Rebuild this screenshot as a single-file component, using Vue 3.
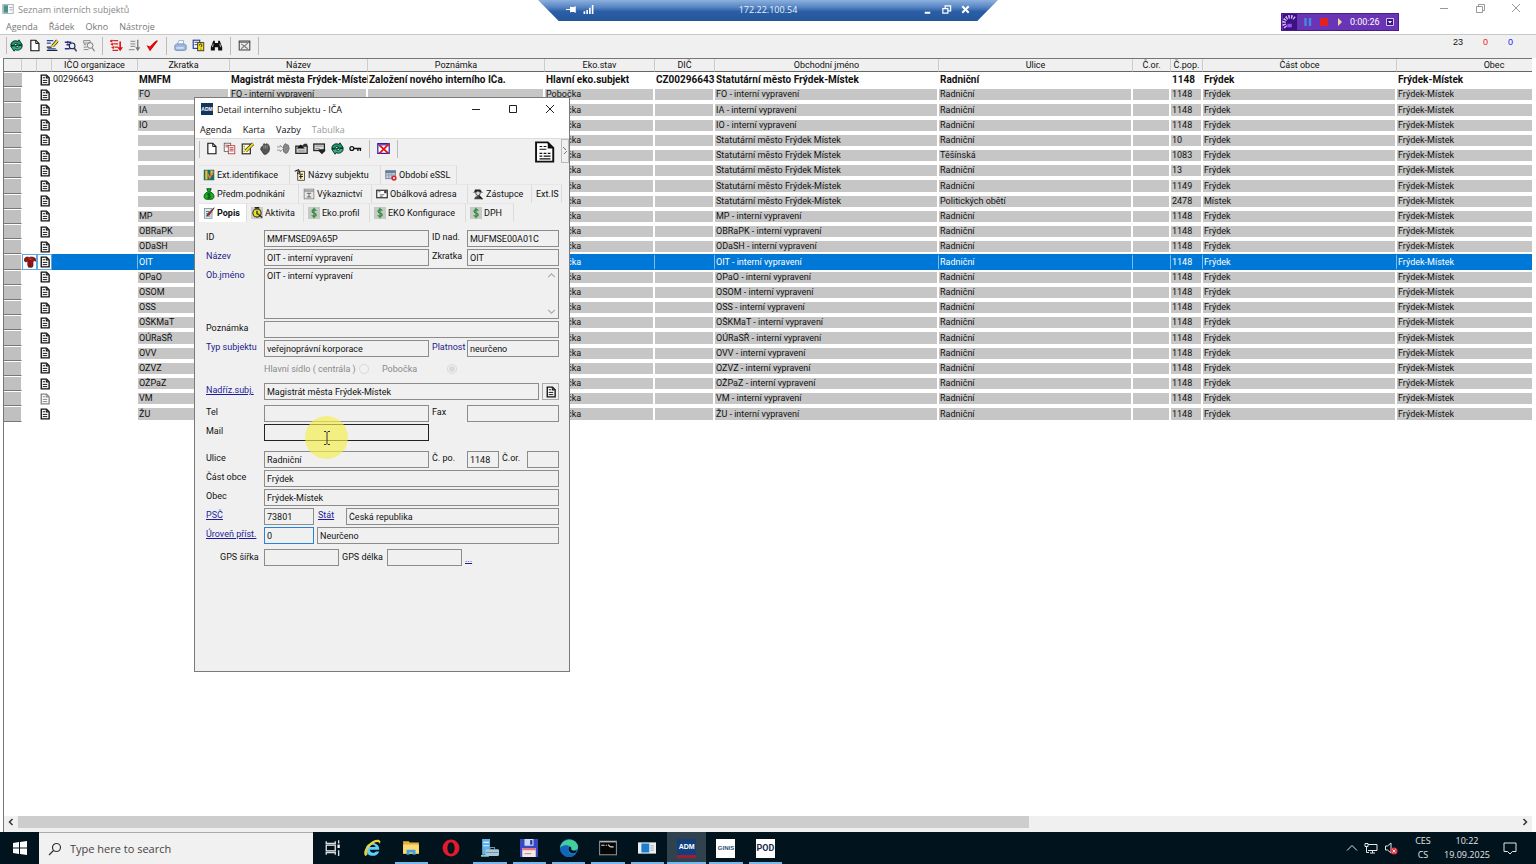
<script setup>
import { ref } from 'vue'

const icons = {
  window: '<rect x="1" y="2" width="14" height="12" fill="#f4f8f8" stroke="#8aa"/><rect x="2" y="3" width="6" height="10" fill="#4f8f8a"/><path d="M10 6h4M10 9h4" stroke="#999"/>',
  refresh: '<path d="M1 8c0-5 5-7 9-5l1-2 4 6-7 1 1-2c-2-1-4 0-4 2z" fill="#1a9a66" stroke="#022" stroke-width="1.1"/><path d="M15 8c0 5-5 7-9 5l-1 2-4-6 7-1-1 2c2 1 4 0 4-2z" fill="#2fb58a" stroke="#022" stroke-width="1.1"/>',
  page: '<path d="M3.5 1.5h6l4 4v9h-10z" fill="#fff" stroke="#111" stroke-width="1.4"/><path d="M9.5 1.5v4h4" fill="none" stroke="#111" stroke-width="1.2"/>',
  edit: '<path d="M1 2h8M1 5h5" stroke="#234a9a" stroke-width="1.6"/><path d="M1 10h6M1 14h13" stroke="#222" stroke-width="1.8"/><path d="M2 12h10" stroke="#3a62b8" stroke-width="1.6"/><path d="M14 2L8 9" stroke="#222" stroke-width="4"/><path d="M14 2L8 9" stroke="#f2dc20" stroke-width="2.4"/>',
  find: '<path d="M1 4h8M3 7h5M1 12h6" stroke="#2a2f90" stroke-width="2"/><path d="M4 2l3 2-3 2z" fill="#2a2f90"/><circle cx="10" cy="8.5" r="3.5" fill="#dfefff" stroke="#223" stroke-width="1.3"/><path d="M12.5 11l3 4" stroke="#446" stroke-width="2"/>',
  findgray: '<path d="M2 2h8v3H2zM2 7h3M2 10h4M2 13h6" stroke="#888" fill="none" stroke-width="1.2"/><circle cx="10" cy="8" r="3.5" fill="#eee" stroke="#777" stroke-width="1.2"/><path d="M12.5 11l3 4" stroke="#888" stroke-width="1.6"/>',
  sortred: '<path d="M0 2l2 1 1-2M1 6l2 1 1-2M2 10l2 1 1-2M4 2h6M5 6h5M6 10h4M3 14h7" stroke="#d22" stroke-width="1.8" fill="none"/><path d="M12.5 3v8" stroke="#e01010" stroke-width="2"/><path d="M9 10h7l-3.5 5z" fill="#e01010"/>',
  sortgray: '<path d="M3 3h6M3 6h6M3 9h6M1 13h7" stroke="#999" stroke-width="1.4"/><path d="M12 1v11" stroke="#777" stroke-width="1.6"/><path d="M9 10h6l-3 5z" fill="#777"/>',
  check: '<path d="M2 9l3 5L14 2l-3 2-6 6z" fill="#f01010" stroke="#d00" stroke-width="1.3"/>',
  printer: '<path d="M4 7l2-5h6l-1 5z" fill="#fff" stroke="#8ca4cc"/><path d="M1 8l2-2h10l2 2v5l-2 1H2l-1-1z" fill="#9fb7df" stroke="#6a86b8"/><path d="M3 11h9" stroke="#eef" stroke-width="1.5"/>',
  copy: '<rect x="1.5" y="1.5" width="8" height="10" fill="#fff" stroke="#223a9a" stroke-width="1.4"/><path d="M3 4h5M3 7h5" stroke="#223"/><rect x="7" y="4.5" width="7.5" height="10" fill="#f4e31c" stroke="#222"/><path d="M9 8c0-3 4-2 3 0l-1 2M11 12v1" stroke="#222" fill="none" stroke-width="1.2"/>',
  binoc: '<path d="M4 2h2v3h4V2h2l3 8v4h-5v-4H6v4H1v-4z" fill="#111"/><path d="M4 6l-1 4M12 6l1 4" stroke="#ddd"/>',
  boxgray: '<rect x="1.5" y="2.5" width="13" height="11" fill="#eee" stroke="#444" stroke-width="1.3"/><path d="M1 4h14" stroke="#444"/><path d="M4 12l8-7M4 6l8 6" stroke="#777" stroke-width="1.3"/>',
  copydoc: '<rect x="1.5" y="1.5" width="8" height="10" fill="#fff" stroke="#555"/><rect x="6.5" y="4.5" width="8" height="10" fill="#fff" stroke="#a33"/><path d="M3 4h4M3 6h3M8 7h5M8 9h5M8 11h5" stroke="#a22"/>',
  editdoc: '<rect x="1.5" y="2.5" width="10" height="12" fill="#fffbe0" stroke="#222" stroke-width="1.4"/><path d="M3 5l2 1M3 8l2 1M3 11l2 1" stroke="#aa1" stroke-width="1.4"/><path d="M15 2L6 11" stroke="#222" stroke-width="4"/><path d="M15 2L6 11" stroke="#f2dc20" stroke-width="2.6"/>',
  hand: '<path d="M3 6l2-1 1-3 2 1 2-1 2 2 1 4-1 4-3 3H6L2 9z" fill="#555" stroke="#333"/><path d="M6 4v4M8 4v4M10 4v4" stroke="#aaa" stroke-width=".8"/>',
  handout: '<path d="M8 5l2-3 2 1 2 1 1 4-2 5-2 1-3-2z" fill="#888" stroke="#666"/><path d="M0 6h4V4l4 4-4 4v-2H0" fill="#eee" stroke="#888"/>',
  folderup: '<path d="M1 5h14v9H1z" fill="#ccc" stroke="#222" stroke-width="1.5"/><path d="M9 5h6V2h-4z" fill="#333"/><path d="M7 3l-5 5h10z" fill="#111"/><path d="M4 11h8" stroke="#777"/>',
  monitor: '<rect x="1" y="2.5" width="13" height="8" fill="#ddd" stroke="#222" stroke-width="1.6"/><path d="M3 5h9M3 8h5" stroke="#777"/><path d="M7 9h8v2l-4 4-4-4z" fill="#222"/>',
  key: '<circle cx="3.5" cy="8" r="2.4" fill="none" stroke="#111" stroke-width="1.5"/><path d="M6 8h9M11 8v3M14 8v3" stroke="#111" stroke-width="1.7"/>',
  redx: '<rect x="1" y="2" width="14" height="12" fill="#fff" stroke="#22a" stroke-width="1.5"/><path d="M1 3.5h14" stroke="#33b" stroke-width="1.5"/><path d="M3 14L15 2M3 4l11 10" stroke="#e11" stroke-width="2.2"/>',
  bigdoc: '<path d="M1.5 1h8.5l4 4v10h-12.5z" fill="#fff" stroke="#111" stroke-width="1.4"/><path d="M10 1v4.5h4z" fill="#111"/><path d="M4 4h2M7 4h2M4 6h5M4 9h2M7 9h2M10 9h2M4 11h2M7 11h5M4 13h8" stroke="#111" stroke-width=".9"/>',
  rowdoc: '<path d="M3 1.5h7l3.5 3.5v9.5H3z" fill="#fff" stroke="#111" stroke-width="1.8"/><path d="M9 2v4h4z" fill="#111"/><path d="M5 5h3M5 8.5h6M5 11.5h6" stroke="#111" stroke-width="1.3"/>',
  jester: '<path d="M1 3c2-2 4-2 6-1 2-1 5-1 8 1l1 4-3-1-1 2v5l-1 2H6l-1-3V7L2 8 0 6z" fill="#9c1414" stroke="#400" stroke-width=".8"/><path d="M8 6v8" stroke="#501010"/><path d="M6 3l2 2 3-2" stroke="#d44" fill="none"/>',
  extid: '<rect x="1" y="1" width="14" height="14" fill="#14706c"/><path d="M3 2h3v12H3zM10 2h3v6h-3z" fill="#f0c030"/><path d="M6 6l3 6 5-9" stroke="#f07a28" stroke-width="2" fill="none"/>',
  names: '<rect x="5" y="3" width="9" height="12" fill="#fff4c0" stroke="#222"/><path d="M1 3l5-2 2 4-4 1M7 7h5M7 10h5M9 8v5" stroke="#222" stroke-width="1.5" fill="none"/>',
  period: '<rect x="1" y="2" width="13" height="11" fill="#bcd" stroke="#678"/><path d="M1 4h13" stroke="#468" stroke-width="2"/><path d="M1 8h13M5 5v8M9 5v8" stroke="#89a"/><circle cx="12" cy="12" r="3.5" fill="#d23"/><circle cx="12" cy="12" r="1.3" fill="#fff"/>',
  bag: '<path d="M5 1h6L9 5c7 2 7 10 2 10H5C0 15 0 7 7 5z" fill="#16b416" stroke="#041" stroke-width="1.2"/><path d="M10 8c-5-1-5 2-2 2s3 4-2 3M8 6v8" stroke="#033" fill="none"/>',
  report: '<rect x="1.5" y="1.5" width="13" height="13" fill="#e8e8e8" stroke="#777"/><path d="M2 4h12M5 7h6M8 7v5M5 12h6" stroke="#444"/>',
  letter: '<rect x="1" y="3" width="14" height="10" fill="#fff" stroke="#222" stroke-width="1.5"/><path d="M3 5h3M5 9h6M5 11h4" stroke="#444"/><path d="M11 4h3v3h-3z" fill="#333"/>',
  agent: '<path d="M3 5l1-3h7l2 3 2 1H1z" fill="#222"/><circle cx="8" cy="7" r="3" fill="#ddd" stroke="#222"/><path d="M3 15c0-6 10-6 10 0z" fill="#444"/><path d="M9 10l5 5" stroke="#111" stroke-width="1.5"/>',
  note: '<rect x="2" y="2" width="10" height="13" fill="#dcebe8" stroke="#789"/><path d="M4 6h4M4 9h5M4 12h6" stroke="#456"/><path d="M15 1L7 8l-2 4 4-2z" fill="#c22" stroke="#433"/>',
  activity: '<rect x="0" y="0" width="16" height="16" fill="#ccc"/><circle cx="8" cy="8" r="5.5" fill="#e9e020" stroke="#333" stroke-width="1.5"/><path d="M5 1h6M8 5v4l3 1M10 10l5 4" stroke="#222" stroke-width="1.7" fill="none"/>',
  dollar: '<rect width="16" height="16" fill="#c4cac4"/><path d="M11 5C9 2 4 4 6 7l4 2c3 3-3 5-5 2M8 1v14" stroke="#2f8a3a" stroke-width="1.7" fill="none"/>',
  taskview: '<path d="M2 2v2h8V2M2 14v-2h8v2M13 1v3M13 10v5" stroke="#ddd" fill="none" stroke-width="1.2"/><rect x="2" y="5.5" width="8" height="5" fill="none" stroke="#ddd" stroke-width="1.2"/><rect x="12" y="5" width="2" height="3" fill="#fff"/>',
  ie: '<path d="M14.5 9.5H6c.4 3 4 3.5 5.5 1.5h3c-2.5 6-11.5 5-12-1.5C2 2 14.5 1 14.5 9.500zM6 7h5.200c-.8-2.500-4.500-2.500-5.200 0z" fill="#5fd0f5"/><path d="M2 15C-2 11 8-1 14.500 1c1.300.5 1 2 .5 3.500 0-2-3-2.500-5.500-.8C5 7 2 11 4 14z" fill="#f2cf3a"/>',
  explorer: '<path d="M1 2h5l1 1h8v10H1z" fill="#e8b23a"/><path d="M1 5h14v8H1z" fill="#fbdc74"/><path d="M4 14V9.500h8V14h-2.500v-2h-3v2z" fill="#3f9fe0"/>',
  opera: '<ellipse cx="8" cy="8" rx="7.5" ry="7.5" fill="#e01b2d"/><ellipse cx="8" cy="8" rx="3.2" ry="5.2" fill="#02141d"/>',
  server: '<path d="M1 0h7v14H1z" fill="#5fb2e8"/><path d="M2 3h5M2 6h5" stroke="#d4efff"/><path d="M0 15h7" stroke="#9cc" stroke-width="1.5"/><rect x="4" y="9" width="12" height="6" rx="1" fill="#a9c9d8"/><path d="M8 9V7.5h4V9M4.5 12h11" stroke="#6f94a6" fill="none"/>',
  floppy: '<path d="M0 0h16v16H0z" fill="#3848c0"/><path d="M4 0h8v6H4z" fill="#cdd6f4"/><path d="M9 1h2v4H9z" fill="#2636a0"/><path d="M2 8h12v8H2z" fill="#f6e6e8"/><path d="M2 8h12v2H2z" fill="#e07880"/><path d="M4 13h6" stroke="#a99"/>',
  edge: '<circle cx="8" cy="8" r="8" fill="#1b7fd0"/><path d="M0 8C1-1 14-2 16 6c.5 4-3 5-6 4 1-5-6-6-10-2z" fill="#43cf9c"/><path d="M0 8c3-4 9-3 8 1-2 3 2 6 6 4-4 6-14 3-14-5z" fill="#1464b8"/><path d="M8 8c-1 3 2 6 6 4l1-2c-3 1-6 0-5-2 0-1-2-2-2 0z" fill="#02141d"/>',
  cmd: '<rect x=".5" y="2" width="15" height="12" fill="#050505" stroke="#888"/><path d="M1 2.5h14" stroke="#ccc"/><path d="M2 5.5h3M6 5.5h1M8 5l2 2M10 7h3" stroke="#ddd"/>',
  app: '<path d="M0 3h16v10H0z" fill="#eee"/><path d="M3 4h7v8H3z" fill="#1c7ed0"/><path d="M11 6h3M11 8h3M11 10h3" stroke="#9ab"/>',
}

const columns = ['', '', '', 'IČO organizace', 'Zkratka', 'Název', 'Poznámka', 'Eko.stav', 'DIČ', 'Obchodní jméno', 'Ulice', 'Č.or.', 'Č.pop.', 'Část obce', 'Obec']

const sub = (z) => ({ z, n: `${z} - interní vypravení`, o: `${z} - interní vypravení` })
const mesto = (o, u, c, cast = 'Frýdek') => ({ z: '', n: o, o, u, c, cast })
const rows = [
  sub('FO'), sub('IA'), sub('IO'),
  mesto('Statutární město Frýdek Místek', 'Radniční', '10'),
  mesto('Statutární město Frýdek Místek', 'Těšínská', '1083'),
  mesto('Statutární město Frýdek Místek', 'Radniční', '13'),
  mesto('Statutární město Frýdek-Místek', 'Radniční', '1149'),
  mesto('Statutární město Frýdek-Místek', 'Politických obětí', '2478', 'Místek'),
  ...['MP', 'OBRaPK', 'ODaSH', 'OIT', 'OPaO', 'OSOM', 'OSS', 'OŠKMaT', 'OÚRaSŘ', 'OVV', 'OZVZ', 'OŽPaZ', 'VM', 'ŽU'].map(sub),
]

const mainTools = [['refresh', 'page', 'edit', 'find', 'findgray'], ['sortred', 'sortgray', 'check'], ['printer', 'copy', 'binoc'], ['boxgray']]
const dlgTools = [['page', 'copydoc', 'editdoc', 'hand', 'handout', 'folderup', 'monitor', 'refresh', 'key'], ['redx']]

const tabRows = [
  [['extid', 'Ext.identifikace', 'w91'], ['names', 'Názvy subjektu', 'w91'], ['period', 'Období eSSL', 'w76']],
  [['bag', 'Předm.podnikání', 'w100'], ['report', 'Výkaznictví', 'w72'], ['letter', 'Obálková adresa', 'w97'], ['agent', 'Zástupce', 'w62'], ['', 'Ext.IS', 'w30']],
  [['note', 'Popis', 'w48'], ['activity', 'Aktivita', 'w57'], ['dollar', 'Eko.profil', 'w66'], ['dollar', 'EKO Konfigurace', 'w97'], ['dollar', 'DPH', 'w48']],
]

const tasks = [
  ['taskview', 'Task View', ''], ['ie', 'Internet Explorer', ''], ['explorer', 'File Explorer', 'run'], ['opera', 'Opera', ''],
  ['server', 'Server Manager', 'run'], ['floppy', 'Commander', 'run'], ['edge', 'Edge', 'run'], ['cmd', 'Command Prompt', 'run'],
  ['app', 'Application', 'run'], ['adm', 'ADM', 'run active'], ['ginis', 'GINIS', 'run'], ['pod', 'POD', 'run'],
]

const branch = ref('pobocka')
</script>

<template>
  <div class="desktop">
    <header class="title">
      <svg class="ic" viewBox="0 0 16 16" v-html="icons.window"></svg>
      <span>Seznam interních subjektů</span>
    </header>
    <nav class="menu main-menu">
      <button>Agenda</button><button>Řádek</button><button>Okno</button><button>Nástroje</button>
    </nav>
    <div class="win-ctl">
      <button aria-label="Minimalizovat"><svg viewBox="0 0 12 12"><path d="M2 6.5h8" /></svg></button>
      <button aria-label="Obnovit"><svg viewBox="0 0 12 12"><path d="M2.5 4.5h6v6h-6zM4.5 4V2.5h6v6H9" /></svg></button>
      <button aria-label="Zavřít"><svg viewBox="0 0 12 12"><path d="M2 2l8 8M10 2l-8 8" /></svg></button>
    </div>

    <div class="toolbar">
      <template v-for="(g, i) in mainTools" :key="i">
        <button v-for="t in g" :key="t" class="tool" :aria-label="t"><svg viewBox="0 0 16 16" v-html="icons[t]"></svg></button>
        <i class="sep"></i>
      </template>
      <div class="counts"><span>23</span><span class="red">0</span><span class="blue">0</span></div>
    </div>

    <main class="grid-pane">
      <div class="grid-view">
        <table>
          <colgroup><col v-for="(c, i) in columns" :key="i" :class="'c' + i" /></colgroup>
          <thead><tr><th v-for="(c, i) in columns" :key="i">{{ c }}</th></tr></thead>
          <tbody>
            <tr class="head">
              <td class="sel"></td><td class="mark"></td>
              <td class="doc"><svg viewBox="0 0 16 16" v-html="icons.rowdoc"></svg></td>
              <td class="ico">00296643</td><td>MMFM</td><td>Magistrát města Frýdek-Místek</td><td>Založení nového interního IČa.</td>
              <td>Hlavní eko.subjekt</td><td>CZ00296643</td><td>Statutární město Frýdek-Místek</td><td>Radniční</td><td></td>
              <td>1148</td><td>Frýdek</td><td>Frýdek-Místek</td>
            </tr>
            <tr v-for="(r, i) in rows" :key="i" :class="{ on: r.z === 'OIT', dim: r.z === 'VM' }">
              <td class="sel"></td>
              <td class="mark"><svg v-if="r.z === 'OIT'" viewBox="0 0 16 16" v-html="icons.jester"></svg></td>
              <td class="doc"><svg viewBox="0 0 16 16" v-html="icons.rowdoc"></svg></td>
              <td class="ico"></td>
              <td>{{ r.z }}</td><td>{{ r.n }}</td><td></td><td>Pobočka</td><td></td><td>{{ r.o }}</td>
              <td>{{ r.u || 'Radniční' }}</td><td></td><td>{{ r.c || '1148' }}</td><td>{{ r.cast || 'Frýdek' }}</td><td>Frýdek-Místek</td>
            </tr>
          </tbody>
        </table>
      </div>
      <div class="hscroll">
        <button aria-label="Vlevo"><svg viewBox="0 0 10 10"><path d="M6.5 2L3.5 5l3 3" /></svg></button>
        <div class="track"><div class="thumb"></div></div>
        <button aria-label="Vpravo"><svg viewBox="0 0 10 10"><path d="M3.5 2l3 3-3 3" /></svg></button>
      </div>
    </main>

    <footer class="taskbar">
      <button class="start" aria-label="Start"><svg viewBox="0 0 14 14"><path d="M0 2l6-1v5.5H0zM7 .9L14 0v6.500H7zM0 7.500h6V13l-6-1zM7 7.500h7V14l-7-.9z" fill="#fff" /></svg></button>
      <label class="search">
        <svg viewBox="0 0 14 14"><circle cx="8.5" cy="5.5" r="4" fill="none" stroke="#333" stroke-width="1.2" /><path d="M5.5 8.5L1 13" stroke="#333" stroke-width="1.2" /></svg>
        <input type="text" placeholder="Type here to search" />
      </label>
      <div class="tasks">
        <button v-for="[k, n, c] in tasks" :key="k" :class="c" :aria-label="n">
          <span v-if="k === 'adm'" class="tile adm">ADM</span>
          <span v-else-if="k === 'ginis'" class="tile ginis">GINIS</span>
          <span v-else-if="k === 'pod'" class="tile pod">POD</span>
          <svg v-else viewBox="0 0 16 16" v-html="icons[k]"></svg>
        </button>
      </div>
      <div class="tray">
        <svg viewBox="0 0 14 14"><path d="M2 9.5l5-5 5 5" /></svg>
        <svg viewBox="0 0 14 14"><path d="M4 3.5h9v6H4M6 12h5M8.5 10v2M1 2.5h3v3H1zM2.5 6v5.5H5" /></svg>
        <svg viewBox="0 0 14 14"><path d="M1.5 5h2L7 2v10L3.5 9h-2z" /><circle cx="10" cy="10" r="3.5" fill="#e23b45" stroke="none" /><path d="M8.5 8.5l3 3M11.5 8.5l-3 3" /></svg>
        <div class="lang"><span>CES</span><span>CS</span></div>
        <div class="clock"><span>10:22</span><span>19.09.2025</span></div>
        <svg viewBox="0 0 14 14"><path d="M1 2h12v8.5H9.5L7 13l-2.5-2.5H1z" /></svg>
      </div>
    </footer>

    <div class="rdp">
      <svg class="pin" viewBox="0 0 12 12"><path d="M0 6h5M5 3v6M6 4h3v4H6zM10 2.5v7" stroke="#fff" stroke-width="1.3" fill="#fff" /></svg>
      <svg class="sig" viewBox="0 0 12 12"><path d="M1.5 8v3M4.5 6.5V11M7.5 4v7M10.5 1v10" stroke="#fff" stroke-width="1.8" /></svg>
      <span class="host">172.22.100.54</span>
      <button aria-label="Minimize"><svg viewBox="0 0 12 12"><path d="M3 9.5h6" stroke="#fff" stroke-width="2" /></svg></button>
      <button aria-label="Restore"><svg viewBox="0 0 12 12"><path d="M2 5h5.5v5H2zM4.5 4.5V2h6v5.5H8" stroke="#fff" stroke-width="1.3" fill="none" /></svg></button>
      <button aria-label="Close"><svg viewBox="0 0 12 12"><path d="M2.5 2.5l7 7M9.5 2.5l-7 7" stroke="#fff" stroke-width="2.2" /></svg></button>
    </div>

    <div class="recorder">
      <svg class="logo" viewBox="0 0 16 18"><rect width="16" height="18" fill="#3c1283" /><path d="M3.5 15A6 6 0 0 1 13 5" fill="none" stroke="#d9b8ff" stroke-width="4" stroke-dasharray="1.6 1.2" /><rect x="5" y="11" width="5" height="4" fill="#a050f0" /></svg>
      <button aria-label="Pauza"><svg viewBox="0 0 12 12"><path d="M3.5 2v8M8 2v8" stroke="#3f8be0" stroke-width="2.4" /></svg></button>
      <button aria-label="Stop"><svg viewBox="0 0 12 12"><path d="M2 2h8v8H2z" fill="#e02222" /></svg></button>
      <button aria-label="Přehrát"><svg viewBox="0 0 12 12"><path d="M4 2l4 4-4 4z" fill="#e6d9a0" /></svg></button>
      <span>0:00:26</span>
      <button aria-label="Nabídka"><svg viewBox="0 0 12 12"><path d="M2.5 2.5h7v7h-7z" fill="#3a1480" stroke="#d8c4f4" /><path d="M4 5h4L6 7.5z" fill="#fff" /></svg></button>
    </div>

    <section class="dialog" role="dialog" aria-labelledby="dlg-title">
      <header class="dlg-title">
        <span class="adm-ic">ADM</span>
        <span id="dlg-title">Detail interního subjektu - IČA</span>
        <div class="dlg-ctl">
          <button aria-label="Minimalizovat"><svg viewBox="0 0 12 12"><path d="M2 6.5h8" /></svg></button>
          <button aria-label="Maximalizovat"><svg viewBox="0 0 12 12"><path d="M2.5 2.5h7v7h-7z" /></svg></button>
          <button aria-label="Zavřít"><svg viewBox="0 0 12 12"><path d="M2 2l8 8M10 2l-8 8" /></svg></button>
        </div>
      </header>
      <nav class="menu dlg-menu">
        <button>Agenda</button><button>Karta</button><button>Vazby</button><button class="off">Tabulka</button>
      </nav>
      <div class="dlg-tools">
        <template v-for="(g, i) in dlgTools" :key="i">
          <button v-for="t in g" :key="t" class="tool" :aria-label="t"><svg viewBox="0 0 16 16" v-html="icons[t]"></svg></button>
          <i class="sep"></i>
        </template>
        <svg class="bigdoc" viewBox="0 0 16 16" v-html="icons.bigdoc"></svg>
        <span class="nub"><svg viewBox="0 0 6 10"><path d="M1 1l3 3M5 5l-3 3" stroke="#777" fill="none" /></svg></span>
      </div>
      <div class="tabs" role="tablist">
        <div v-for="(r, i) in tabRows" :key="i" class="tab-row">
          <button v-for="[ic, t, w] in r" :key="t" role="tab" class="tab" :class="[w, { cur: t === 'Popis' }]" :aria-selected="t === 'Popis'">
            <svg v-if="ic" viewBox="0 0 16 16" v-html="icons[ic]"></svg>{{ t }}
          </button>
        </div>
      </div>
      <form class="form" @submit.prevent>
        <div class="fr"><label for="id">ID</label><input id="id" class="f" value="MMFMSE09A65P" /><label class="mid" for="idn">ID nad.</label><input id="idn" class="w92" value="MUFMSE00A01C" /></div>
        <div class="fr"><label class="b" for="naz">Název</label><input id="naz" class="f" value="OIT - interní vypravení" /><label class="mid" for="zkr">Zkratka</label><input id="zkr" class="w92" value="OIT" /></div>
        <div class="fr">
          <label class="b" for="obj">Ob.jméno</label>
          <div class="area">
            <textarea id="obj">OIT - interní vypravení</textarea>
            <span class="vs"><svg viewBox="0 0 8 8"><path d="M1 5.5l3-3 3 3" /></svg><svg viewBox="0 0 8 8"><path d="M1 2.5l3 3 3-3" /></svg></span>
          </div>
        </div>
        <div class="fr"><label for="poz">Poznámka</label><input id="poz" class="f" /></div>
        <div class="fr"><label class="b" for="typ">Typ subjektu</label><input id="typ" class="f" value="veřejnoprávní korporace" /><label class="mid b" for="pla">Platnost</label><input id="pla" class="w92" value="neurčeno" /></div>
        <div class="fr radios">
          <label class="first">Hlavní sídlo ( centrála )<input v-model="branch" type="radio" name="sidlo" value="hlavni" disabled /></label>
          <label class="second">Pobočka<input v-model="branch" type="radio" name="sidlo" value="pobocka" disabled /></label>
        </div>
        <div class="fr"><label for="nad"><a href="#">Nadříz.subj.</a></label><input id="nad" class="f" value="Magistrát města Frýdek-Místek" /><button class="pick" aria-label="Vybrat subjekt"><svg viewBox="0 0 16 16" v-html="icons.rowdoc"></svg></button></div>
        <div class="fr gap-s"><label for="tel">Tel</label><input id="tel" class="f" /><label class="mid" for="fax">Fax</label><input id="fax" class="w92" /></div>
        <div class="fr"><label for="mail">Mail</label><input id="mail" class="w165 strong" /></div>
        <div class="fr gap-l"><label for="uli">Ulice</label><input id="uli" class="f" value="Radniční" /><label class="mid" for="cpo">Č. po.</label><input id="cpo" class="w32" value="1148" /><label class="cor" for="cor">Č.or.</label><input id="cor" class="w32" /></div>
        <div class="fr"><label for="cast">Část obce</label><input id="cast" class="f" value="Frýdek" /></div>
        <div class="fr"><label for="obec">Obec</label><input id="obec" class="f" value="Frýdek-Místek" /></div>
        <div class="fr"><label for="psc"><a href="#">PSČ</a></label><input id="psc" class="w50" value="73801" /><label class="stat" for="stat"><a href="#">Stát</a></label><input id="stat" class="f" value="Česká republika" /></div>
        <div class="fr"><label for="uro"><a href="#">Úroveň příst.</a></label><input id="uro" class="w50 focus" value="0" /><input class="f after" aria-label="Název úrovně" value="Neurčeno" /></div>
        <div class="fr gap-s"><label class="gps" for="gs">GPS šířka</label><input id="gs" class="w75" /><label class="gps2" for="gd">GPS délka</label><input id="gd" class="w75" /><a class="dots" href="#">...</a></div>
      </form>
    </section>

    <div class="pointer"><svg viewBox="0 0 10 16"><path d="M2 1.5h2l1 1 1-1h2M5 2.5v11M2 14.5h2l1-1 1 1h2" fill="none" stroke="#333" /></svg></div>
  </div>
</template>

<style>
html, body { margin: 0; background: #fff; overflow: hidden; }
</style>

<style scoped>
* { box-sizing: border-box; }
button { border: 0; padding: 0; margin: 0; background: none; font: inherit; color: inherit; }
svg { display: block; flex: none; }
.desktop {
  position: relative; display: flex; flex-direction: column; height: 100vh; overflow: hidden;
  font-family: Roboto, "Liberation Sans", sans-serif; font-size: 9px; color: #111; background: #fff;
}
.title { display: flex; align-items: center; gap: 4px; height: 18px; padding-left: 2px; font: 9px "Open Sans", sans-serif; color: #888; }
.title .ic { width: 12px; height: 12px; }
.menu { display: flex; gap: 11px; align-items: center; font: 9px "Open Sans", sans-serif; }
.main-menu { height: 16px; padding-left: 6px; color: #777; }
.win-ctl { position: absolute; right: 14px; top: 2px; display: flex; gap: 24px; }
.win-ctl svg, .dlg-ctl svg { width: 12px; height: 12px; fill: none; stroke: #999; }
.toolbar { display: flex; align-items: center; height: 24px; padding: 0 23px 2px 7px; background: linear-gradient(#bbb, #bbb) 6px 2px / 1px 17px no-repeat #f0f0f0; border-top: 1px solid #c8c8c8; }
.tool { width: 18px; height: 18px; display: grid; place-items: center; }
.tool svg { width: 13px; height: 13px; }
.sep { width: 10px; height: 18px; background: linear-gradient(#bbb, #bbb) center / 1px 100% no-repeat; }
.counts { margin-left: auto; display: flex; align-self: flex-start; padding-top: 2px; font: 9px/10px "Liberation Sans", sans-serif; }
.counts span { width: 25px; text-align: right; }
.counts .red { color: #e22; }
.counts .blue { color: #22e; }

.grid-pane { flex: 1; min-height: 0; display: flex; flex-direction: column; margin: 0 4px 0 3px; border-left: 1px solid #777; border-top: 1px solid #777; }
.grid-view { flex: 1; min-height: 0; overflow: hidden; }
table { border-collapse: separate; border-spacing: 0; table-layout: fixed; width: 1588px; height: 363px; }
.c0 { width: 18px; } .c1 { width: 15px; } .c2 { width: 15px; } .c3 { width: 86px; } .c4 { width: 92px; }
.c5 { width: 138px; } .c6 { width: 177px; } .c7 { width: 110px; } .c8 { width: 60px; } .c9 { width: 224px; }
.c10 { width: 194px; } .c11 { width: 38px; } .c12 { width: 32px; } .c13 { width: 194px; }
th { height: 13px; padding: 0; font-weight: 400; line-height: 12px; background: #f0f0f0; border-bottom: 1px solid #666; border-right: 1px solid #ccc; white-space: nowrap; }
td { padding: 0 0 0 1px; line-height: 11px; white-space: nowrap; overflow: hidden; background: #c6c6c6; border: solid #fff; border-width: 2px 2px 2px 0; }
td.sel { background: #c0c0c0; border-width: 1px 1px 1px 0; border-bottom-color: #777; }
td.mark, td.ico { background: #fff; }
td.doc { background: #fff; border-width: 1px; padding: 0; }
.doc svg, .mark svg { width: 12px; height: 12px; margin: 0 auto; }
td.mark { padding: 0; border-width: 1px; }
.head td:not(.sel) { background: #fff; }
.head td:not(.ico) { font: bold 10px/11px Roboto, "Liberation Sans", sans-serif; border-right-width: 0; }
.on td:not(.sel, .mark, .doc) { background: #0078d7; color: #fff; border-color: #0078d7; border-right: 1px solid #7fbcec; }
.on td.mark, .on td.doc { border-color: #5aa9e6; }
.dim .doc { opacity: .5; }

.hscroll { display: flex; height: 16px; padding-bottom: 4px; background: #f0f0f0; }
.hscroll button { width: 14px; display: grid; place-items: center; }
.hscroll svg { width: 10px; height: 10px; fill: none; stroke: #333; stroke-width: 1.5; }
.track { flex: 1; }
.thumb { width: 67.4%; height: 100%; background: #cdcdcd; }

.taskbar { display: flex; height: 32px; background: #01131d; color: #e6e6e6; font: 9px "Open Sans", sans-serif; }
.start { width: 39px; display: grid; place-items: center; }
.start svg { width: 14px; height: 14px; }
.search { display: flex; align-items: center; gap: 8px; width: 274px; padding-left: 9px; background: #f1f1f1; border-top: 1px solid #aaa; }
.search svg { width: 14px; height: 14px; }
.search input { flex: 1; min-width: 0; border: 0; padding: 0; background: none; font: 11px "Open Sans", sans-serif; }
.search input::placeholder { color: #444; opacity: 1; }
.tasks { display: grid; grid-template-columns: repeat(12, 1fr); width: 472px; }
.tasks button { display: grid; place-items: center; position: relative; }
.tasks svg { width: 18px; height: 18px; }
.run::after { content: ""; position: absolute; left: 3px; right: 3px; bottom: 0; height: 2px; background: #76b9ed; }
.tasks .active { background: #2f424d; }
.active::after { left: 0; right: 0; }
.tile { width: 19px; height: 19px; display: grid; place-items: center; background: #fff; font: bold 7px "Liberation Sans", sans-serif; }
.tile.adm { background: #123f7c; color: #fff; border-bottom: 3px solid #a01c30; }
.tile.ginis { color: #2a4f78; font-size: 6px; }
.tile.pod { color: #222c50; font: bold 9px Roboto, sans-serif; }
.tray { margin-left: auto; display: flex; align-items: center; gap: 6px; padding-right: 19px; }
.tray svg { width: 14px; height: 14px; fill: none; stroke: #e6e6e6; }
.tray svg:first-child { margin-right: -1px; }
.lang, .clock { display: grid; text-align: center; line-height: 14px; }
.lang { width: 24px; margin-left: 7px; }
.clock { width: 52px; margin-right: 4px; }

.rdp {
  position: absolute; left: 50%; top: 0; width: 460px; margin-left: -230px; height: 21px; padding: 0 27px 2px 28px;
  display: flex; align-items: center; gap: 6px; color: #e8f0fa; font: 9px "Open Sans", sans-serif;
  background: linear-gradient(#8cb0de, #5584c2 35%, #2b5ea6 55%, #24569b); clip-path: polygon(0 0, 100% 0, 95.5% 100%, 4.5% 100%);
}
.rdp svg { width: 11px; height: 11px; }
.host { flex: 1; text-align: center; padding-left: 20px; }
.rdp button + button { margin-left: 2px; }
.recorder { position: absolute; right: 137px; top: 13px; width: 118px; height: 18px; display: flex; align-items: center; gap: 4px; background: #6a35b5; border: 1px solid #4a1c90; color: #fff; font: 9px Roboto, sans-serif; }
.recorder svg { width: 12px; height: 12px; }
.recorder .logo { width: 16px; height: 16px; }

.dialog { position: absolute; left: 194px; top: 97px; width: 376px; height: 575px; background: #f0f0f0; border: 1px solid #7a7a7a; }
.dlg-title { display: flex; align-items: center; gap: 4px; height: 22px; padding: 0 13px 0 6px; background: #fff; font: 9px "Open Sans", sans-serif; }
.adm-ic { width: 12px; height: 12px; background: #12355f; color: #fff; font: bold 5px/12px "Liberation Sans", sans-serif; text-align: center; }
.dlg-ctl { margin-left: auto; display: flex; gap: 25px; }
.dlg-ctl svg { stroke: #222; }
.dlg-menu { height: 18px; padding-left: 5px; background: #fff; }
.off { color: #999; }
.dlg-tools { display: flex; height: 27px; padding: 0 0 7px 7px; align-items: center; border-top: 1px solid #ddd; background: linear-gradient(#bbb, #bbb) 4px 2px / 1px 17px no-repeat; }
.bigdoc { width: 22px; height: 22px; margin: 2px 5px 0 auto; align-self: flex-start; }
.nub { width: 8px; height: 24px; display: grid; place-items: center; border: 1px solid #bbb; align-self: flex-start; }
.nub svg { width: 6px; height: 10px; }
.tab-row { display: flex; height: 19px; padding-left: 4px; }
.tab { display: flex; align-items: center; gap: 2px; padding-left: 4px; border-right: 1px solid #dcdcdc; border-top: 1px solid #e6e6e6; white-space: nowrap; }
.tab svg { width: 12px; height: 12px; }
.cur { background: #fff; font-weight: bold; }
.w91 { width: 91px; } .w76 { width: 76px; } .w100 { width: 100px; } .w72 { width: 73px; } .w97 { width: 96px; }
.w62 { width: 64px; } .w30 { width: 30px; } .w48 { width: 48px; } .w57 { width: 57px; } .w66 { width: 66px; }

.form { display: flex; flex-direction: column; gap: 2px; padding: 8px 10px 0 11px; }
.fr { display: flex; min-height: 17px; }
.fr > label { width: 58px; line-height: 14px; white-space: nowrap; }
.fr > label.b { color: #1c1c8c; }
.fr a { color: #1c1c9c; }
.fr > label.mid { width: 38px; padding-left: 3px; }
.fr input, textarea { height: 17px; border: 1px solid #8c8c8c; background: #f0f0f0; padding: 0 2px; font: inherit; color: #111; border-radius: 0; outline: 0; min-width: 0; }
.fr .f { flex: 1; }
.w92 { width: 92px; } .w32 { width: 32px; } .w50 { width: 50px; } .w75 { width: 75px; } .w165 { width: 165px; }
.area { flex: 1; position: relative; display: flex; }
.area textarea { flex: 1; height: 51px; resize: none; padding: 2px; overflow: hidden; }
.vs { position: absolute; right: 3px; top: 3px; bottom: 3px; display: flex; flex-direction: column; justify-content: space-between; }
.vs svg { width: 9px; height: 9px; fill: none; stroke: #aaa; }
.radios { height: 22px; padding: 0 0 2px 58px; align-items: center; color: #8a8a8a; }
.fr.radios > label { display: flex; align-items: center; justify-content: space-between; }
.fr.radios > .first { width: 105px; }
.fr.radios > .second { width: 75px; margin-left: 13px; }
.fr input[type="radio"] { width: 10px; height: 10px; margin: 0; opacity: .6; }
.pick { width: 17px; margin-left: 3px; display: grid; place-items: center; border: 1px solid #aaa; }
.pick svg { width: 12px; height: 12px; }
.gap-s { margin-top: 3px; }
.gap-l { margin-top: 8px; }
.fr input.strong { border-color: #222; }
.fr input.focus { border-color: #2a82d8; }
.fr > label.cor { width: 28px; padding-left: 3px; }
.fr > label.stat { width: 32px; padding-left: 4px; }
.fr .after { margin-left: 3px; }
.fr > label.gps { padding-left: 14px; line-height: 17px; }
.fr > label.gps2 { width: 48px; padding-left: 3px; line-height: 17px; }
.dots { padding-left: 3px; line-height: 20px; }
.pointer { position: absolute; left: 305px; top: 416px; width: 43px; height: 43px; border-radius: 50%; display: grid; place-items: center; background: rgba(245, 238, 70, .65); pointer-events: none; }
.pointer svg { width: 10px; height: 16px; }
</style>
